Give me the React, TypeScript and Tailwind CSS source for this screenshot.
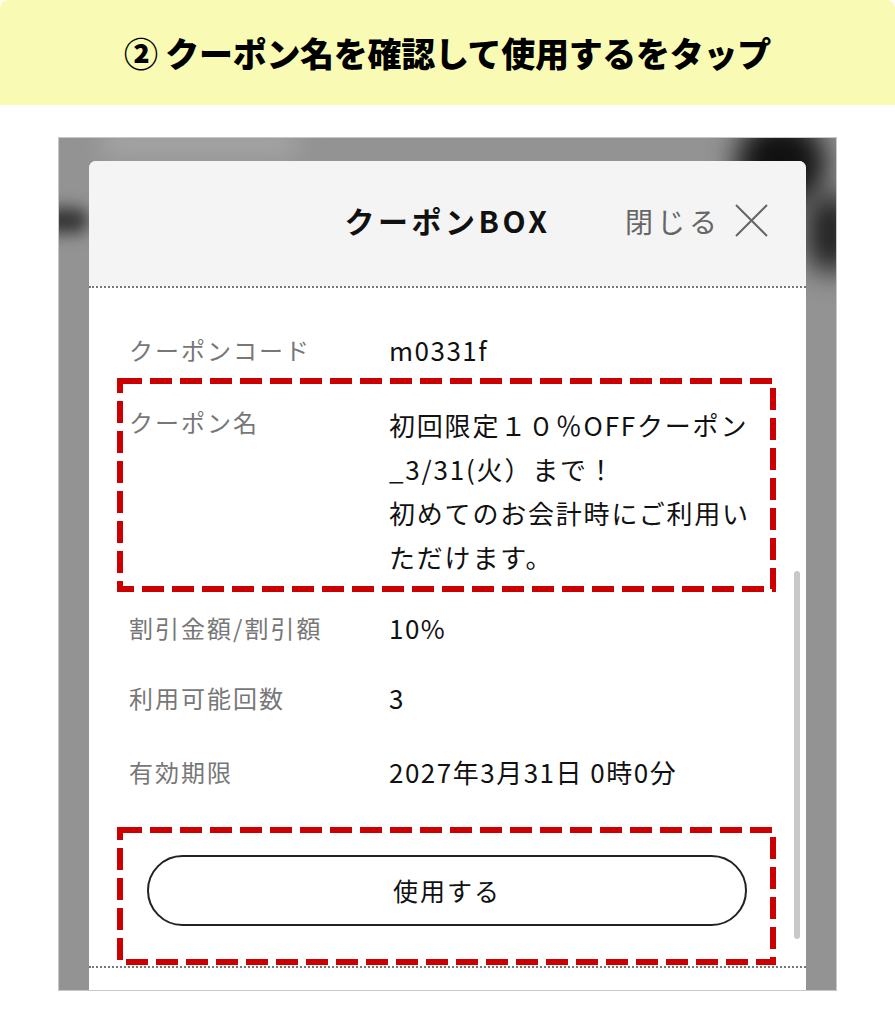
const FONT = "font-['Noto_Sans_CJK_JP','Noto_Sans',sans-serif]"

function DashedBox({ className, children }: { className: string; children: React.ReactNode }) {
  return (
    <div className={'relative ' + className}>
      <svg className="absolute inset-[3px] w-[calc(100%-6px)] h-[calc(100%-6px)] overflow-visible pointer-events-none">
        <rect
          x="0"
          y="0"
          width="100%"
          height="100%"
          fill="none"
          stroke="#cc0000"
          strokeWidth="6"
          strokeDasharray="22 8"
        />
      </svg>
      {children}
    </div>
  )
}

function Row({ label, value, className = '' }: { label: string; value: string; className?: string }) {
  return (
    <div className={'flex items-start pl-[12px] ' + className}>
      <div className="w-[260px] shrink-0 text-[24px] leading-[44px] tracking-[2px] text-[#777]">{label}</div>
      <div className="text-[26px] leading-[44px] tracking-[1.5px] text-[#111]">{value}</div>
    </div>
  )
}

export default function App() {
  return (
    <div className={'w-[895px] h-[1021px] bg-white ' + FONT}>
      {/* step banner */}
      <div className="h-[105px] bg-[#f9fbb5] rounded-t-[8px] flex items-center justify-center">
        <h1 className="text-[34px] font-black text-black tracking-[-0.3px]">② クーポン名を確認して使用するをタップ</h1>
      </div>

      {/* screenshot frame */}
      <div className="relative mt-[32px] ml-[58px] w-[779px] h-[854px] border border-[#c8c8c8] bg-[#939393] overflow-hidden">
        <div className="absolute right-[10px] -top-[20px] w-[90px] h-[90px] rounded-full bg-[#111] blur-[14px]" />
        <div className="absolute right-[-20px] top-[55px] w-[50px] h-[80px] rounded-full bg-[#222] blur-[14px]" />
        <div className="absolute left-[-20px] top-[70px] w-[50px] h-[25px] rounded-full bg-[#333] blur-[8px]" />
        <div className="absolute left-[40px] -top-[10px] w-[200px] h-[30px] rounded-full bg-[#a4a4a4] blur-[12px]" />

        <div className="relative z-10 ml-[30px] mt-[23px] w-[717px] h-[829px] bg-white rounded-t-[7px] flex flex-col">
          {/* header */}
          <div className="h-[125px] bg-[#f4f4f4] rounded-t-[7px] grid grid-cols-[1fr_auto_1fr] items-center pb-[6px]">
            <div />
            <div className="text-[30px] font-bold tracking-[3.5px] text-[#111]">クーポンBOX</div>
            <div className="flex items-center justify-end gap-[14px] pr-[38px]">
              <span className="text-[28px] tracking-[4px] text-[#666]">閉じる</span>
              <svg width="33" height="33" viewBox="0 0 33 33" stroke="#666" strokeWidth="2" fill="none">
                <path d="M1 1 L32 32 M32 1 L1 32" />
              </svg>
            </div>
          </div>
          <div className="border-b-2 border-dotted border-[#777]" />

          {/* body */}
          <div className="relative flex-1 pl-[28px] pr-[29px]">
            <div className="absolute right-[6px] top-[283px] w-[6px] h-[368px] rounded-full bg-[#c8c8c8]" />

            <Row label="クーポンコード" value="m0331f" className="mt-[40px]" />

            <DashedBox className="mt-[6px] pt-[22px] pb-[13px] w-[659px]">
              <div className="flex items-start pl-[12px]">
                <div className="w-[260px] shrink-0 text-[24px] leading-[44px] tracking-[2px] text-[#777]">クーポン名</div>
                <div className="mt-[3px] w-[385px] text-[26px] leading-[44px] tracking-[1.8px] text-[#111]">
                  初回限定１０％OFFクーポン
                  <br />
                  _3/31(火）まで！
                  <br />
                  初めてのお会計時にご利用い
                  <br />
                  ただけます。
                </div>
              </div>
            </DashedBox>

            <Row label="割引金額/割引額" value="10%" className="mt-[14px]" />
            <Row label="利用可能回数" value="3" className="mt-[26px]" />
            <Row label="有効期限" value="2027年3月31日 0時0分" className="mt-[30px]" />

            <DashedBox className="mt-[33px] h-[138px] w-[659px] pt-[28px] pl-[30px]">
              <button
                type="button"
                className="w-[600px] h-[71px] rounded-full border-2 border-[#222] bg-white text-[25px] tracking-[2px] text-[#111]"
              >
                使用する
              </button>
            </DashedBox>
            <div className="-ml-[28px] -mr-[29px] mt-[1px] border-b-2 border-dotted border-[#777]" />
          </div>
        </div>
      </div>
    </div>
  )
}
